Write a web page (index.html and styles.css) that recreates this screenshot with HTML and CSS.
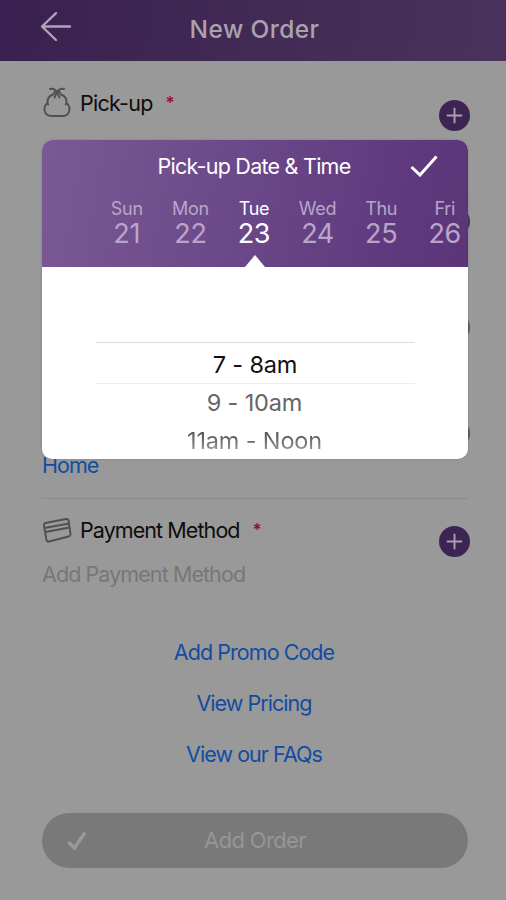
FILE: index.html
```html
<!DOCTYPE html>
<html lang="en">
<head>
<meta charset="utf-8">
<title>New Order</title>
<link rel="stylesheet" href="styles.css">
</head>
<body>
<div class="screen">
  <header class="topbar">
    <svg class="back" viewBox="0 0 32 32"><path d="M30 15.500H2M16 2.200L2 15.500L16 29"/></svg>
    <h1>New Order</h1>
  </header>
  <main class="content">
    <section class="item">
      <div class="item-head">
        <svg class="icon" viewBox="0 0 30 34"><path d="M11 8.500C7 10 5 13 5.500 17C3 19 2.300 21 2.500 24C3 28.500 6 30 9.500 30H20.500C24 30 27 28.500 27.500 24C27.700 21 27 19 24.500 17C25 13 23 10 19 8.500M5.500 17L6.300 18.500M24.500 17L23.700 18.500M11 8.500L13 5.500M19 8.500L17 5.500M8 3C11 2 13 3 15 6C17 3 19 2 22 3M15 6L12.500 11.500M15 6L17.500 11.500"/></svg>
        <span class="label pickup">Pick-up</span><span class="req">*</span>
      </div>
      <span class="plus"><svg viewBox="0 0 32 32"><path d="M8 16H24M16 8V24"/></svg></span>
    </section>
    <section class="item"><span class="plus"></span></section>
    <section class="item"><span class="plus off"></span></section>
    <section class="item address"><a class="home">Home</a><span class="plus off"></span></section>
    <section class="item payment">
      <div class="item-head">
        <svg class="icon" viewBox="0 0 30 34"><path d="M3.500 10L24 6Q26 5.600 26.500 7.500L28.500 21Q28.800 23 26.500 23.500L7 28.500Q5 29 4.500 27L2 13Q1.500 10.500 3.500 10ZM2.500 15L27 10.500M3.500 19L27.500 14.500"/></svg>
        <span class="label method">Payment Method</span><span class="req">*</span>
      </div>
      <div class="placeholder">Add Payment Method</div>
      <span class="plus"><svg viewBox="0 0 32 32"><path d="M8 16H24M16 8V24"/></svg></span>
    </section>
    <nav class="links"><a class="promo">Add Promo Code</a><a class="pricing">View Pricing</a><a class="faqs">View our FAQs</a></nav>
    <div class="submit">
      <svg viewBox="0 0 20 20"><path d="M1.500 11L7.500 17L18 1.500"/></svg>
      <span>Add Order</span>
    </div>
  </main>
  <div class="dialog">
    <div class="dialog-head">
      <div class="dialog-title"><span>Pick-up Date &amp; Time</span>
        <svg viewBox="0 0 28 22"><path d="M1.500 12L10 20L26.500 1.500"/></svg>
      </div>
      <div class="days">
        <div class="day"><span>Sun</span><b>21</b></div>
        <div class="day"><span>Mon</span><b>22</b></div>
        <div class="day active"><span>Tue</span><b>23</b></div>
        <div class="day"><span>Wed</span><b>24</b></div>
        <div class="day"><span>Thu</span><b>25</b></div>
        <div class="day"><span>Fri</span><b>26</b></div>
      </div>
      <i class="pointer"></i>
    </div>
    <div class="times">
      <div class="time selected"><span>7 - 8am</span></div>
      <div class="time"><span>9 - 10am</span></div>
      <div class="time last"><span>11am - Noon</span></div>
    </div>
  </div>
</div>
</body>
</html>
```
FILE: styles.css
```css
* { box-sizing: border-box; }
body { margin: 0; font-family: Inter, "Liberation Sans", sans-serif; }
svg { display: block; fill: none; stroke-linecap: round; stroke-linejoin: round; }
.screen { position: relative; width: 506px; height: 900px; background: #999; overflow: hidden; }
.topbar { position: relative; height: 61px; display: flex; justify-content: center; background: linear-gradient(100deg, #3a2050, #412a54 50%, #49325c); }
.topbar h1 { margin: 0; font-size: 24.500px; line-height: 59px; font-weight: 550; letter-spacing: .4px; color: #aaa2ae; padding-left: 3px; }
.back { position: absolute; left: 40px; top: 11px; width: 32px; height: 32px; stroke: #b0a4b5; stroke-width: 2.4; }
.content { padding: 11px 38px 0 42px; }
.item { position: relative; height: 106px; }
.item-head { display: flex; align-items: center; height: 34px; }
.item:first-child { padding-top: 14px; }
.icon { width: 30px; height: 34px; stroke: #505050; stroke-width: 1.900; flex: none; }
.label { margin-left: 8px; font-size: 21.500px; line-height: 32px; letter-spacing: -.92px; color: #0d0d0d; white-space: nowrap; }
.label.pickup { letter-spacing: -.75px; }
.req { margin-left: 13px; color: #9c1034; font-size: 17px; font-weight: 600; line-height: 30px; }
.plus { position: absolute; right: -2px; top: 27.500px; width: 31px; height: 31px; border-radius: 50%; background: #3d2553; }
.plus.off { background: #555; }
.plus svg { width: 31px; height: 31px; stroke: #aaa0af; stroke-width: 2; stroke-linecap: butt; }
.address { height: 108px; }
.home { position: absolute; left: 0; top: 61px; font-size: 21.500px; line-height: 28px; letter-spacing: -.95px; color: #124ca2; }
.payment { border-top: 1px solid #8b8b8b; padding-top: 14px; height: 129px; }
.payment .plus { top: 27px; }
.placeholder { margin-top: 13px; font-size: 21.500px; line-height: 29px; letter-spacing: -.92px; color: #777; white-space: nowrap; }
.links { display: flex; flex-direction: column; align-items: center; height: 186px; padding-right: 2px; }
.links a { font-size: 21.500px; line-height: 51px; letter-spacing: -.95px; color: #124ca2; white-space: nowrap; }
.submit { position: relative; width: 426px; height: 55px; border-radius: 28px; background: #797979; color: #969696; text-align: center; font-size: 22px; line-height: 55px; letter-spacing: -.65px; }
.submit svg { position: absolute; left: 25px; top: 18px; width: 20px; height: 20px; stroke: #999; stroke-width: 3.500; stroke-linecap: butt; stroke-linejoin: miter; }
.dialog { position: absolute; left: 42px; top: 140px; width: 426px; height: 319px; border-radius: 10px; background: #fff; overflow: hidden; box-shadow: 0 0 2px #777; }
.dialog-head { position: relative; height: 127px; background: linear-gradient(100deg, #7a5993, #6a4789 50%, #603a7e 80%, #5c3579); color: #fff; }
.dialog-title { height: 54px; text-align: center; font-size: 21.500px; line-height: 53px; letter-spacing: -.75px; padding-right: 2px; }
.dialog-title svg { position: absolute; left: 368px; top: 15px; width: 28px; height: 22px; stroke: #fff; stroke-width: 3; stroke-linecap: butt; stroke-linejoin: miter; }
.days { display: flex; width: 382px; margin-left: 53px; }
.day { flex: 0 0 63.600px; text-align: center; color: #baa5ca; }
.day span { display: block; font-size: 18px; line-height: 29px; letter-spacing: -.3px; }
.day b { display: block; font-size: 27px; line-height: 22px; font-weight: 400; letter-spacing: -.3px; }
.day.active { color: #fff; }
.pointer { position: absolute; left: 203px; bottom: 0; border: solid transparent; border-width: 0 10px 12px; border-bottom-color: #fff; }
.times { padding-top: 75px; }
.time { height: 38px; line-height: 37px; text-align: center; font-size: 23.500px; letter-spacing: -.15px; padding-right: 1px; color: #666; }
.time.selected { height: 42px; line-height: 43px; margin: 0 53px 0 54px; border-top: 1px solid #ddd; border-bottom: 1px solid #eee; color: #111; }
.time.last span { background: linear-gradient(#5c5c5c 35%, #999 85%); background-clip: text; -webkit-background-clip: text; color: transparent; }
```
